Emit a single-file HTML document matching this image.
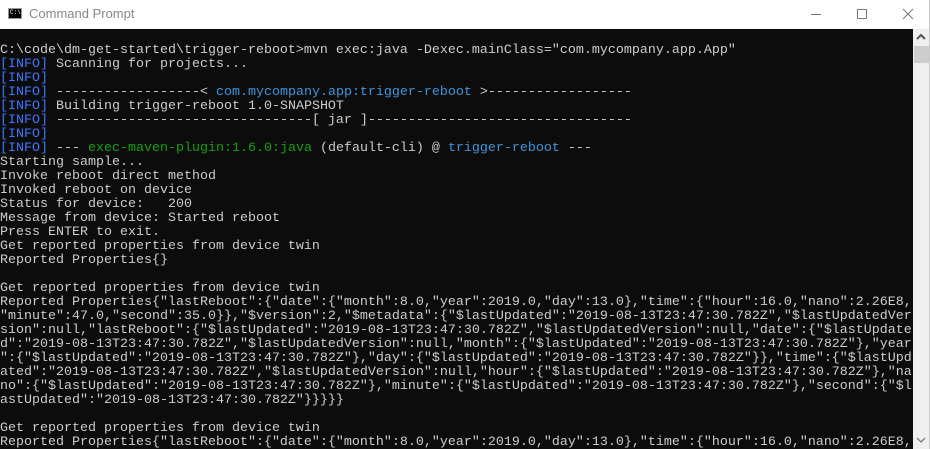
<!DOCTYPE html>
<html><head><meta charset="utf-8"><style>
html,body{margin:0;padding:0;width:930px;height:449px;overflow:hidden;background:#0c0c0c}
#title{position:absolute;left:0;top:0;width:929px;height:29px;background:#fff;border-right:1px solid #c8c8c8}
#title .t{position:absolute;left:29px;top:6px;font:13px "Liberation Sans",sans-serif;color:#888}
#icon{position:absolute;left:8px;top:8px;width:14px;height:11px;background:#000;border:1px solid #999;box-sizing:border-box}
#icon span{position:absolute;left:1px;top:1px;font:6px "Liberation Mono",monospace;color:#fff;line-height:6px}
#con{position:absolute;left:0;top:29px;width:912px;height:420px;background:#0c0c0c;overflow:hidden}
pre{margin:0;position:absolute;left:0;top:15px;font:13.33px/14px "Liberation Mono",monospace;color:#cccccc;white-space:pre}
.b{color:#3b78ff}.c{color:#3a96dd}.g{color:#13a10e}
#sb{position:absolute;left:913px;top:29px;width:16px;height:420px;background:#f0f0f0;border-right:1px solid #c8c8c8}
#thumb{position:absolute;left:1px;top:17px;width:15px;height:17px;background:#cdcdcd}
</style></head><body>
<div id="title"><div id="icon"><span>C:\</span></div><div class="t">Command Prompt</div>
<svg style="position:absolute;left:808px;top:8px" width="110" height="14"><line x1="3" y1="6.5" x2="13" y2="6.5" stroke="#777"/><rect x="49.5" y="1.5" width="9" height="9" fill="none" stroke="#777"/><line x1="95" y1="1" x2="105" y2="11" stroke="#777"/><line x1="105" y1="1" x2="95" y2="11" stroke="#777"/></svg>
</div>
<div id="con"><pre>C:\code\dm-get-started\trigger-reboot>mvn exec:java -Dexec.mainClass="com.mycompany.app.App"
<span class="b">[INFO]</span> Scanning for projects...
<span class="b">[INFO]</span>
<span class="b">[INFO]</span> ------------------&lt; <span class="c">com.mycompany.app:trigger-reboot</span> &gt;------------------
<span class="b">[INFO]</span> Building trigger-reboot 1.0-SNAPSHOT
<span class="b">[INFO]</span> --------------------------------[ jar ]---------------------------------
<span class="b">[INFO]</span>
<span class="b">[INFO]</span> --- <span class="g">exec-maven-plugin:1.6.0:java</span> (default-cli) @ <span class="c">trigger-reboot</span> ---
Starting sample...
Invoke reboot direct method
Invoked reboot on device
Status for device:   200
Message from device: Started reboot
Press ENTER to exit.
Get reported properties from device twin
Reported Properties{}

Get reported properties from device twin
Reported Properties{"lastReboot":{"date":{"month":8.0,"year":2019.0,"day":13.0},"time":{"hour":16.0,"nano":2.26E8,
"minute":47.0,"second":35.0}},"$version":2,"$metadata":{"$lastUpdated":"2019-08-13T23:47:30.782Z","$lastUpdatedVer
sion":null,"lastReboot":{"$lastUpdated":"2019-08-13T23:47:30.782Z","$lastUpdatedVersion":null,"date":{"$lastUpdate
d":"2019-08-13T23:47:30.782Z","$lastUpdatedVersion":null,"month":{"$lastUpdated":"2019-08-13T23:47:30.782Z"},"year
":{"$lastUpdated":"2019-08-13T23:47:30.782Z"},"day":{"$lastUpdated":"2019-08-13T23:47:30.782Z"}},"time":{"$lastUpd
ated":"2019-08-13T23:47:30.782Z","$lastUpdatedVersion":null,"hour":{"$lastUpdated":"2019-08-13T23:47:30.782Z"},"na
no":{"$lastUpdated":"2019-08-13T23:47:30.782Z"},"minute":{"$lastUpdated":"2019-08-13T23:47:30.782Z"},"second":{"$l
astUpdated":"2019-08-13T23:47:30.782Z"}}}}}

Get reported properties from device twin
Reported Properties{"lastReboot":{"date":{"month":8.0,"year":2019.0,"day":13.0},"time":{"hour":16.0,"nano":2.26E8,</pre></div>
<div id="sb"><svg style="position:absolute;left:3px;top:4px" width="10" height="8"><polyline points="1,6 5,2 9,6" fill="none" stroke="#555" stroke-width="2"/></svg><div id="thumb"></div>
<svg style="position:absolute;left:3px;top:407px" width="10" height="8"><polyline points="1,2 5,6 9,2" fill="none" stroke="#888" stroke-width="1.5"/></svg></div>
</body></html>
